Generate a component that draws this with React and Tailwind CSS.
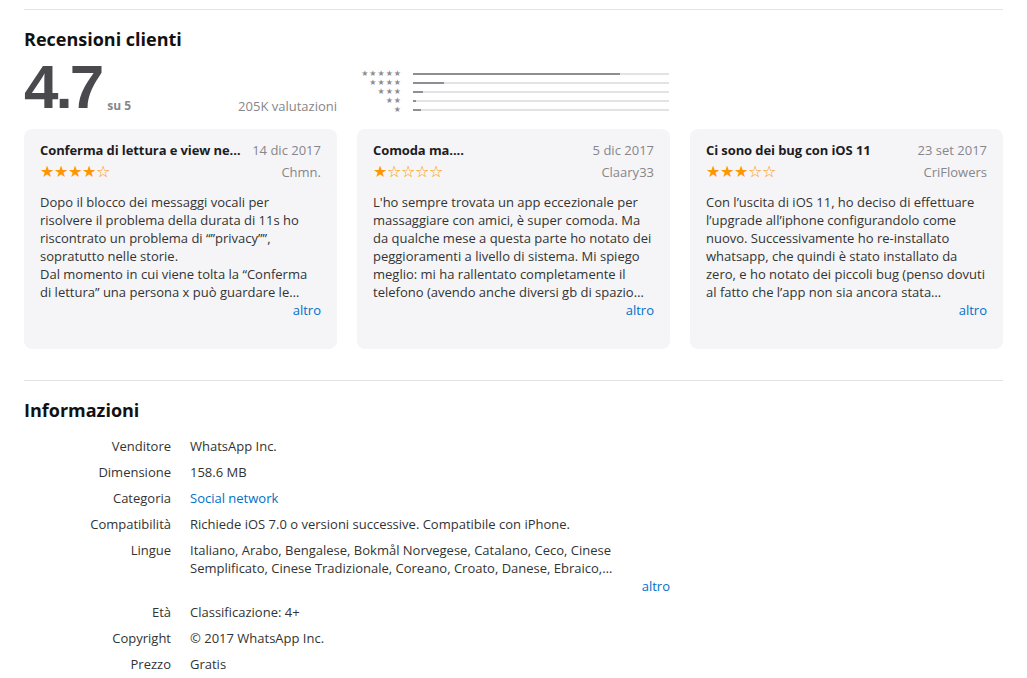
import React from "react";

const reviews = [
    {
        title: "Conferma di lettura e view negative per le storie",
        date: "14 dic 2017",
        author: "Chmn.",
        rating: 4,
        body: "Dopo il blocco dei messaggi vocali per risolvere il problema della durata di 11s ho riscontrato un problema di \u201c\u201dprivacy\u201d\u201d, sopratutto nelle storie.\nDal momento in cui viene tolta la \u201cConferma di lettura\u201d una persona x può guardare le storie degli altri senza che nessuno lo sappia",
    },
    {
        title: "Comoda ma....",
        date: "5 dic 2017",
        author: "Claary33",
        rating: 1,
        body: "L'ho sempre trovata un app eccezionale per massaggiare con amici, è super comoda. Ma da qualche mese a questa parte ho notato dei peggioramenti a livello di sistema. Mi spiego meglio: mi ha rallentato completamente il telefono (avendo anche diversi gb di spazio libero)",
    },
    {
        title: "Ci sono dei bug con iOS 11",
        date: "23 set 2017",
        author: "CriFlowers",
        rating: 3,
        body: "Con l\u2019uscita di iOS 11, ho deciso di effettuare l\u2019upgrade all\u2019iphone configurandolo come nuovo. Successivamente ho re-installato whatsapp, che quindi è stato installato da zero, e ho notato dei piccoli bug (penso dovuti al fatto che l\u2019app non sia ancora stata aggiornata)",
    },
];

const bars = [
    { stars: 5, pct: 81 },
    { stars: 4, pct: 12 },
    { stars: 3, pct: 4 },
    { stars: 2, pct: 1 },
    { stars: 1, pct: 3 },
];

const info = [
    { label: "Venditore", value: "WhatsApp Inc." },
    { label: "Dimensione", value: "158.6 MB" },
    { label: "Categoria", value: "Social network", link: true },
    { label: "Compatibilità", value: "Richiede iOS 7.0 o versioni successive. Compatibile con iPhone." },
    {
        label: "Lingue",
        value: "Italiano, Arabo, Bengalese, Bokmål Norvegese, Catalano, Ceco, Cinese Semplificato, Cinese Tradizionale, Coreano, Croato, Danese, Ebraico, Finlandese, Francese, Giapponese",
        more: true,
    },
    { label: "Età", value: "Classificazione: 4+" },
    { label: "Copyright", value: "© 2017 WhatsApp Inc." },
    { label: "Prezzo", value: "Gratis" },
];

const Stars = ({ rating }) => (
    <div className="flex text-[16px] leading-none text-[#ff9500] font-['DejaVu_Sans',sans-serif]">
        {[1, 2, 3, 4, 5].map((i) => (
            <span key={i} className="w-[14px]">{i <= rating ? "\u2605" : "\u2606"}</span>
        ))}
    </div>
);

const App = () => {
    return (
        <div className="min-h-[678px] bg-white px-6 pt-[9px] text-[#333] font-['Open_Sans','Liberation_Sans',sans-serif]">
            <div className="border-t border-[#e3e3e3]"></div>

            <h2 className="mt-[17px] text-[18px] font-bold leading-6 text-[#111]">Recensioni clienti</h2>

            <div className="mt-[9px] flex items-start">
                <div className="flex w-[313px] items-end">
                    <span className="text-[62px] font-bold leading-[54px] tracking-[-3px] text-[#4a4a4e] font-['Liberation_Sans',Arial,sans-serif]">4.7</span>
                    <span className="ml-[6px] text-[12px] font-bold leading-4 text-[#86868b]">su 5</span>
                    <span className="ml-auto text-[13px] leading-4 text-[#86868b]">205K valutazioni</span>
                </div>
                <div className="ml-[23px] mt-[9px] flex flex-col">
                    {bars.map((b) => (
                        <div key={b.stars} className="flex h-[9px] items-center">
                            <div className="w-[42px] text-right text-[8px] leading-none tracking-[1px] text-[#8e8e93] font-['DejaVu_Sans',sans-serif]">
                                {"\u2605".repeat(b.stars)}
                            </div>
                            <div className="ml-[11px] h-[2px] w-[256px] bg-[#e3e3e6]">
                                <div className="h-[2px] bg-[#8e8e93]" style={{ width: `${b.pct}%` }}></div>
                            </div>
                        </div>
                    ))}
                </div>
            </div>

            <div className="mt-[15px] grid grid-cols-3 gap-5">
                {reviews.map((r) => (
                    <div key={r.title} className="flex h-[220px] flex-col rounded-lg bg-[#f5f5f7] px-4 pt-[13px]">
                        <div className="flex items-baseline gap-2">
                            <h3 className="min-w-0 flex-1 truncate text-[13px] font-bold leading-4 tracking-[-0.1px] text-[#1d1d1f]">{r.title}</h3>
                            <span className="shrink-0 text-[13px] leading-4 text-[#86868b]">{r.date}</span>
                        </div>
                        <div className="mt-[6px] flex items-center justify-between">
                            <Stars rating={r.rating} />
                            <span className="text-[13px] leading-4 text-[#86868b]">{r.author}</span>
                        </div>
                        <p className="mt-[13px] line-clamp-6 whitespace-pre-line text-[13px] leading-[18px] text-[#333]">
                            {r.body}
                        </p>
                        <div className="text-right text-[13px] leading-[18px] text-[#0070c9]">altro</div>
                    </div>
                ))}
            </div>

            <div className="mt-[31px] border-t border-[#e3e3e3]"></div>

            <h2 className="mt-[17px] text-[18px] font-bold leading-6 text-[#111]">Informazioni</h2>

            <div className="mt-[11px] flex flex-col">
                {info.map((row) => (
                    <div key={row.label} className="flex py-1">
                        <div className="w-[147px] shrink-0 text-right text-[13px] leading-[18px] text-[#333]">{row.label}</div>
                        <div className="ml-[19px] w-[480px]">
                            <p
                                className={
                                    row.more
                                        ? "line-clamp-2 text-[13px] leading-[18px] text-[#333]"
                                        : row.link
                                        ? "text-[13px] leading-[18px] text-[#0070c9]"
                                        : "text-[13px] leading-[18px] text-[#333]"
                                }
                            >
                                {row.value}
                            </p>
                            {row.more && <div className="text-right text-[13px] leading-[18px] text-[#0070c9]">altro</div>}
                        </div>
                    </div>
                ))}
            </div>
        </div>
    );
};

export default App;
